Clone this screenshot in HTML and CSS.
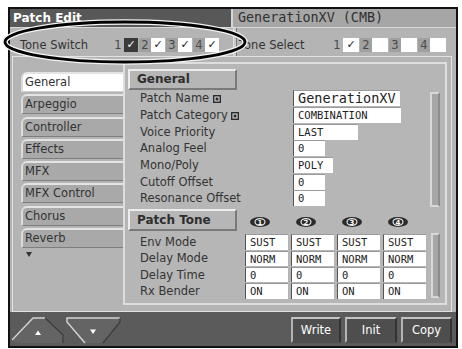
FILE: index.html
```html
<!DOCTYPE html>
<html lang="en">
<head>
  <meta charset="UTF-8" />
  <title>Patch Edit</title>
  <meta name="viewport" content="width=device-width, initial-scale=1.0" />
  <link rel="stylesheet" href="styles.css">
</head>
<body>
  <div class="screen">
    <div class="titlebar">
      <div class="title-main">Patch Edit</div>
      <div class="title-patch">GenerationXV (CMB)</div>
    </div>

    <div class="switchbar">
      <div class="tone-switch">
        <span class="bar-label">Tone Switch</span>
        <div class="items">
          <span class="num plain">1</span><span class="box on">✓</span>
          <span class="num">2</span><span class="box">✓</span>
          <span class="num">3</span><span class="box">✓</span>
          <span class="num">4</span><span class="box">✓</span>
        </div>
      </div>
      <div class="sep"></div>
      <div class="tone-select">
        <span class="bar-label">Tone Select</span>
        <div class="items">
          <span class="num plain">1</span><span class="box">✓</span>
          <span class="num">2</span><span class="box"></span>
          <span class="num">3</span><span class="box"></span>
          <span class="num">4</span><span class="box"></span>
        </div>
      </div>
    </div>

    <div class="main">
      <ul class="tabs">
        <li class="tab active">General</li>
        <li class="tab">Arpeggio</li>
        <li class="tab">Controller</li>
        <li class="tab">Effects</li>
        <li class="tab">MFX</li>
        <li class="tab">MFX Control</li>
        <li class="tab">Chorus</li>
        <li class="tab">Reverb</li>
        <li class="more"></li>
      </ul>

      <div class="panel">
        <div class="section-head">General</div>
        <div class="general-body">
          <div class="params">
            <div class="param">
              <span class="label">Patch Name <svg class="mark" width="8" height="8" viewBox="0 0 8 8"><rect width="8" height="8" fill="#2c2c2c"/><rect x="2" y="2" width="4" height="4" fill="none" stroke="#e8e8e8"/></svg></span>
              <span class="value big" style="width: 107px">GenerationXV</span>
            </div>
            <div class="param">
              <span class="label">Patch Category <svg class="mark" width="8" height="8" viewBox="0 0 8 8"><rect width="8" height="8" fill="#2c2c2c"/><rect x="2" y="2" width="4" height="4" fill="none" stroke="#e8e8e8"/></svg></span>
              <span class="value" style="width: 108px">COMBINATION</span>
            </div>
            <div class="param">
              <span class="label">Voice Priority</span>
              <span class="value" style="width: 65px">LAST</span>
            </div>
            <div class="param">
              <span class="label">Analog Feel</span>
              <span class="value" style="width: 32px">0</span>
            </div>
            <div class="param">
              <span class="label">Mono/Poly</span>
              <span class="value" style="width: 40px">POLY</span>
            </div>
            <div class="param">
              <span class="label">Cutoff Offset</span>
              <span class="value" style="width: 32px">0</span>
            </div>
            <div class="param">
              <span class="label">Resonance Offset</span>
              <span class="value" style="width: 32px">0</span>
            </div>
          </div>
          <div class="scroll first"></div>
        </div>

        <div class="tone-head">
          <div class="section-head">Patch Tone</div>
          <div class="tone-nums">
            <svg width="20" height="10" viewBox="0 0 20 10"><ellipse cx="10" cy="5" rx="10" ry="5" fill="#2a2a2a"/><ellipse cx="10" cy="5" rx="5" ry="3.4" fill="none" stroke="#e6e6e6" stroke-width="1.2"/><text x="10" y="7.6" text-anchor="middle">1</text></svg>
            <svg width="20" height="10" viewBox="0 0 20 10"><ellipse cx="10" cy="5" rx="10" ry="5" fill="#2a2a2a"/><ellipse cx="10" cy="5" rx="5" ry="3.4" fill="none" stroke="#e6e6e6" stroke-width="1.2"/><text x="10" y="7.6" text-anchor="middle">2</text></svg>
            <svg width="20" height="10" viewBox="0 0 20 10"><ellipse cx="10" cy="5" rx="10" ry="5" fill="#2a2a2a"/><ellipse cx="10" cy="5" rx="5" ry="3.4" fill="none" stroke="#e6e6e6" stroke-width="1.2"/><text x="10" y="7.6" text-anchor="middle">3</text></svg>
            <svg width="20" height="10" viewBox="0 0 20 10"><ellipse cx="10" cy="5" rx="10" ry="5" fill="#2a2a2a"/><ellipse cx="10" cy="5" rx="5" ry="3.4" fill="none" stroke="#e6e6e6" stroke-width="1.2"/><text x="10" y="7.6" text-anchor="middle">4</text></svg>
          </div>
        </div>

        <div class="tone-body">
          <div class="tone-table">
            <div class="trow"><span class="label">Env Mode</span><span class="cell">SUST</span><span class="cell">SUST</span><span class="cell">SUST</span><span class="cell">SUST</span></div>
            <div class="trow"><span class="label">Delay Mode</span><span class="cell">NORM</span><span class="cell">NORM</span><span class="cell">NORM</span><span class="cell">NORM</span></div>
            <div class="trow"><span class="label">Delay Time</span><span class="cell">0</span><span class="cell">0</span><span class="cell">0</span><span class="cell">0</span></div>
            <div class="trow"><span class="label">Rx Bender</span><span class="cell">ON</span><span class="cell">ON</span><span class="cell">ON</span><span class="cell">ON</span></div>
          </div>
          <div class="scroll second"></div>
        </div>
      </div>
    </div>

    <div class="bottombar">
      <svg class="nav" width="112" height="27" viewBox="0 0 112 27">
        <polygon points="0,23 21,1 33,1 51,18 51,26 3,26" fill="#646464"/>
        <polyline points="0,23 21,1 33,1" fill="none" stroke="#d2d2d2" stroke-width="1.5"/>
        <polyline points="33,1 51,18 51,26" fill="none" stroke="#3c3c3c" stroke-width="1.2"/>
        <polygon points="23,18 26,13.5 29,18" fill="#fff"/>
        <polygon points="55,1 108,1 108,5 91,26 73,26 55,5" fill="#646464"/>
        <polyline points="73,26 55,5 55,1 108,1" fill="none" stroke="#d2d2d2" stroke-width="1.5"/>
        <polyline points="108,1 108,5 91,26" fill="none" stroke="#3c3c3c" stroke-width="1.2"/>
        <polygon points="78,12.5 84,12.5 81,17" fill="#fff"/>
      </svg>
      <div class="buttons">
        <button class="btn" style="width: 50px">Write</button>
        <button class="btn" style="width: 52px">Init</button>
        <button class="btn" style="width: 51px">Copy</button>
      </div>
    </div>
  </div>

  <svg class="callout" width="250" height="48" viewBox="0 0 250 48">
    <ellipse cx="124" cy="23" rx="120" ry="20" fill="none" stroke="#f4f4f4" stroke-width="5.5"/>
    <ellipse cx="124" cy="23" rx="120" ry="20" fill="none" stroke="#000" stroke-width="2.8"/>
  </svg>
</body>
</html>
```

FILE: styles.css
```css
body {
  margin: 0;
  background: #fff;
  font-family: 'DejaVu Sans', sans-serif;
  font-size: 11.5px;
  color: #333;
}
.screen {
  box-sizing: border-box;
  width: 450px;
  height: 341px;
  margin: 7px 0 0 8px;
  border: 2px solid #111;
  background: #b4b4b4;
  display: flex;
  flex-direction: column;
}
.titlebar {
  display: flex;
  height: 18px;
  flex: none;
}
.title-main {
  width: 221px;
  background: #585858;
  color: #fff;
  font-weight: bold;
  font-size: 12px;
  line-height: 18px;
  padding-left: 3px;
  box-sizing: border-box;
}
.title-patch {
  flex: 1;
  background: #a6a6a6;
  border-left: 2px solid #d6d6d6;
  font-family: 'DejaVu Sans Mono', monospace;
  font-size: 13.4px;
  line-height: 18px;
  padding-left: 5px;
  color: #303030;
}
.switchbar {
  display: flex;
  align-items: center;
  height: 29px;
  flex: none;
  box-sizing: border-box;
  padding-top: 5px;
  border-top: 1px solid #d8d8d8;
}
.tone-switch, .tone-select {
  display: flex;
  align-items: center;
}
.tone-switch {
  width: 223px;
  padding-left: 10px;
  box-sizing: border-box;
}
.tone-select {
  padding-left: 2px;
}
.bar-label {
  width: 92px;
  flex: none;
}
.items {
  display: flex;
  align-items: center;
}
.num {
  width: 12px;
  height: 14px;
  line-height: 14px;
  text-align: center;
  background: #a0a0a0;
  color: #4a4a4a;
}
.num.plain {
  background: transparent;
}
.box {
  width: 14px;
  height: 14px;
  line-height: 14px;
  margin-right: 1px;
  text-align: center;
  background: #fff;
  color: #222;
  font-size: 11px;
}
.box.on {
  background: #3a3a3a;
  color: #fff;
}
.tone-select .box {
  width: 16px;
}
.sep {
  width: 2px;
  height: 28px;
  margin-top: -5px;
  border-left: 1px solid #e0e0e0;
  border-right: 1px solid #7a7a7a;
  background: #c8c8c8;
}
.main {
  display: flex;
  height: 256px;
  flex: none;
  box-sizing: border-box;
  margin: 0 4px 0 2px;
  border: 1px solid #e2e2e2;
  padding-right: 3px;
}
.tabs {
  list-style: none;
  margin: 0 0 0 8px;
  padding: 15px 0 0;
  width: 102px;
}
.tab {
  box-sizing: border-box;
  height: 20px;
  margin-bottom: 2.3px;
  padding-left: 2px;
  line-height: 17px;
  background: #a9a9a9;
  border-top: 2px solid #e4e4e4;
  border-left: 2px solid #dcdcdc;
  border-bottom: 1px solid #7e7e7e;
  border-top-left-radius: 6px;
  color: #333;
}
.tab.active {
  background: #fff;
  border-bottom-color: #cfcfcf;
}
.more {
  width: 0;
  height: 0;
  margin: 4px 0 0 5px;
  border-left: 3px solid transparent;
  border-right: 3px solid transparent;
  border-top: 5px solid #333;
}
.panel {
  box-sizing: border-box;
  width: 324px;
  height: 243px;
  margin-top: 5px;
  border: 2px solid #dedede;
  background: #b6b6b6;
}
.section-head {
  box-sizing: border-box;
  width: 109px;
  height: 21px;
  margin: 5px 0 0 3px;
  padding-left: 7px;
  border: 2px solid;
  border-color: #ececec #7a7a7a #7a7a7a #ececec;
  font-weight: bold;
  font-size: 12px;
  line-height: 17px;
  color: #2e2e2e;
}
.general-body, .tone-body {
  display: flex;
}
.general-body {
  height: 117px;
}
.params, .tone-table {
  flex: 1;
  padding-left: 15px;
}
.param, .trow {
  display: flex;
  align-items: center;
  height: 16.7px;
}
.param .label {
  width: 153px;
  flex: none;
}
.mark {
  vertical-align: -0.5px;
}
.value, .cell {
  box-sizing: border-box;
  height: 16px;
  padding-left: 4px;
  background: #fff;
  border-left: 1px solid #555;
  border-top: 1px solid #9a9a9a;
  font-family: 'DejaVu Sans Mono', monospace;
  font-size: 10.5px;
  line-height: 15px;
  color: #222;
}
.value.big {
  font-size: 13.5px;
}
.scroll {
  box-sizing: border-box;
  width: 10px;
  margin-right: 5px;
  background: #a6a6a6;
  border: 2px solid #d8d8d8;
  border-right-color: #8c8c8c;
}
.scroll.first {
  height: 115px;
  margin-top: 2px;
}
.tone-head {
  display: flex;
  align-items: center;
  margin-top: 2px;
  height: 22px;
}
.tone-head .section-head {
  height: 22px;
  margin-top: 0;
  line-height: 18px;
}
.tone-nums {
  display: flex;
  gap: 26px;
  margin: 3px 0 0 13px;
}
.tone-nums text {
  fill: #fff;
  font-family: 'DejaVu Sans', sans-serif;
  font-weight: bold;
  font-size: 7px;
}
.tone-body {
  margin-top: 3px;
}
.trow {
  height: 16.3px;
}
.trow .label {
  width: 105px;
  flex: none;
}
.cell {
  width: 43px;
  height: 15.5px;
  margin-right: 3px;
}
.scroll.second {
  width: 9px;
  height: 65px;
  margin-top: -1px;
}
.bottombar {
  flex: 1;
  display: flex;
  justify-content: space-between;
  background: #5b5b5b;
  padding: 5px 4px 0 2px;
}
.nav {
  display: block;
}
.buttons {
  display: flex;
  gap: 4px;
}
.btn {
  box-sizing: border-box;
  height: 26px;
  padding: 0;
  background: #4e4e4e;
  border: 2px solid;
  border-color: #c4c4c4 #333 #4e4e4e #b4b4b4;
  color: #fff;
  font-family: 'DejaVu Sans', sans-serif;
  font-size: 11.5px;
}
.callout {
  position: absolute;
  left: 1px;
  top: 19px;
}
```
